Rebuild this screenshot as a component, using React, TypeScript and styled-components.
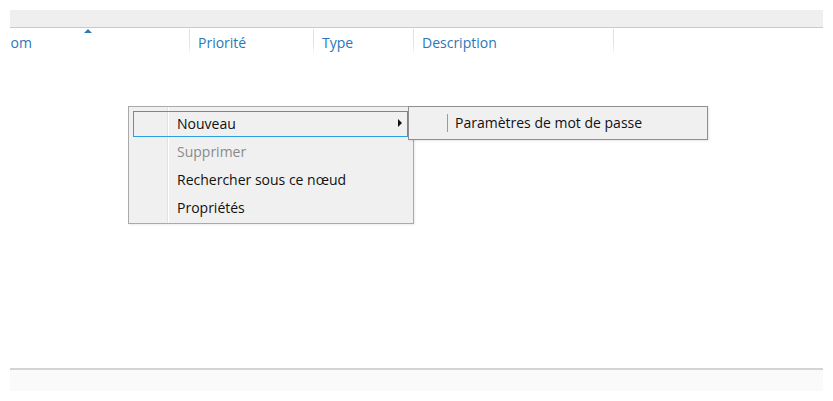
import React from "react";
import styled, { createGlobalStyle } from "styled-components";

const Global = createGlobalStyle`
  html, body { margin: 0; padding: 0; background: #ffffff; }
  body { font-family: "Open Sans", "Noto Sans", "DejaVu Sans", sans-serif; }
  * { box-sizing: border-box; }
`;

const Page = styled.div`
  width: 833px;
  height: 401px;
  padding: 10px 10px 10px 10px;
  display: flex;
  flex-direction: column;
  position: relative;
  overflow: hidden;
`;

const Toolbar = styled.div`
  height: 18px;
  background: #efefef;
  border-bottom: 1px solid #c9c9c9;
  flex: none;
`;

const HeaderViewport = styled.div`
  height: 26px;
  overflow: hidden;
  flex: none;
  border-top: 1px solid #ffffff;
`;

const HeaderRow = styled.div`
  display: flex;
  margin-left: -18px;
  height: 100%;
`;

const Col = styled.div<{ $w: number }>`
  position: relative;
  width: ${(p) => p.$w}px;
  flex: none;
  height: 100%;
  padding-left: 8px;
  display: flex;
  align-items: center;
  font-size: 14px;
  color: #2a77b8;
  border-right: 1px solid;
  border-image: linear-gradient(to bottom, #e2e2e2 60%, rgba(226, 226, 226, 0)) 1;
  padding-top: 2px;
`;

const SortArrow = styled.span`
  position: absolute;
  top: 0;
  left: 50%;
  margin-left: -7px;
  width: 0;
  height: 0;
  border-left: 4px solid transparent;
  border-right: 4px solid transparent;
  border-bottom: 4px solid #2f79b3;
`;

const ListArea = styled.div`
  flex: 1;
  position: relative;
`;

const StatusBar = styled.div`
  height: 23px;
  flex: none;
  background: #fafafa;
  border-top: 2px solid #d4d4d4;
`;

const Menu = styled.div`
  position: absolute;
  left: 128px;
  top: 106px;
  width: 286px;
  display: flex;
  flex-direction: column;
  background: linear-gradient(
    to right,
    #f0f0f0 38px,
    #e2e2e2 38px,
    #e2e2e2 39px,
    #ffffff 39px,
    #ffffff 40px,
    #f0f0f0 40px
  );
  border: 1px solid #a9a9a9;
  padding: 3px 5px 1px 4px;
  font-size: 14px;
  box-shadow: 1px 1px 2px rgba(0, 0, 0, 0.08);
`;

const SubMenu = styled.div`
  position: absolute;
  left: 279px;
  top: -1px;
  width: 300px;
  display: flex;
  flex-direction: column;
  background: #f0f0f0;
  border: 1px solid #8f8f8f;
  padding: 2px 2px;
  font-size: 14px;
  box-shadow: 1px 1px 2px rgba(0, 0, 0, 0.1);
`;

const Item = styled.div<{ $active?: boolean; $disabled?: boolean }>`
  position: relative;
  height: 26px;
  margin: 1px 0;
  padding-bottom: 2px;
  display: flex;
  align-items: center;
  border: 1px solid ${(p) => (p.$active ? "#2d9fe0" : "transparent")};
  color: ${(p) => (p.$disabled ? "#8a8a8a" : "#111111")};
  white-space: nowrap;
`;

const Gutter = styled.div<{ $w: number; $line?: boolean }>`
  width: ${(p) => p.$w}px;
  align-self: stretch;
  flex: none;
  margin: 3px 0 1px;
  border-right: 1px solid ${(p) => (p.$line ? "#9a9a9a" : "transparent")};
`;

const Label = styled.span<{ $pad: number }>`
  padding-left: ${(p) => p.$pad}px;
  flex: 1;
`;

const Caret = styled.span`
  width: 0;
  height: 0;
  border-top: 4px solid transparent;
  border-bottom: 4px solid transparent;
  border-left: 4px solid #111111;
  margin-right: 5px;
`;

export default function App() {
  return (
    <>
      <Global />
      <Page>
        <Toolbar />
        <HeaderViewport>
          <HeaderRow>
            <Col $w={198}>
              <SortArrow />
              Nom
            </Col>
            <Col $w={124}>Priorité</Col>
            <Col $w={100}>Type</Col>
            <Col $w={200}>Description</Col>
          </HeaderRow>
        </HeaderViewport>
        <ListArea />
        <StatusBar />
        <Menu>
          <Item $active>
            <Gutter $w={34} />
            <Label $pad={9}>Nouveau</Label>
            <Caret />
          </Item>
          <Item $disabled>
            <Gutter $w={34} />
            <Label $pad={9}>Supprimer</Label>
          </Item>
          <Item>
            <Gutter $w={34} />
            <Label $pad={9}>Rechercher sous ce nœud</Label>
          </Item>
          <Item>
            <Gutter $w={34} />
            <Label $pad={9}>Propriétés</Label>
          </Item>
          <SubMenu>
            <Item>
              <Gutter $w={36} $line />
              <Label $pad={7}>Paramètres de mot de passe</Label>
            </Item>
          </SubMenu>
        </Menu>
      </Page>
    </>
  );
}
